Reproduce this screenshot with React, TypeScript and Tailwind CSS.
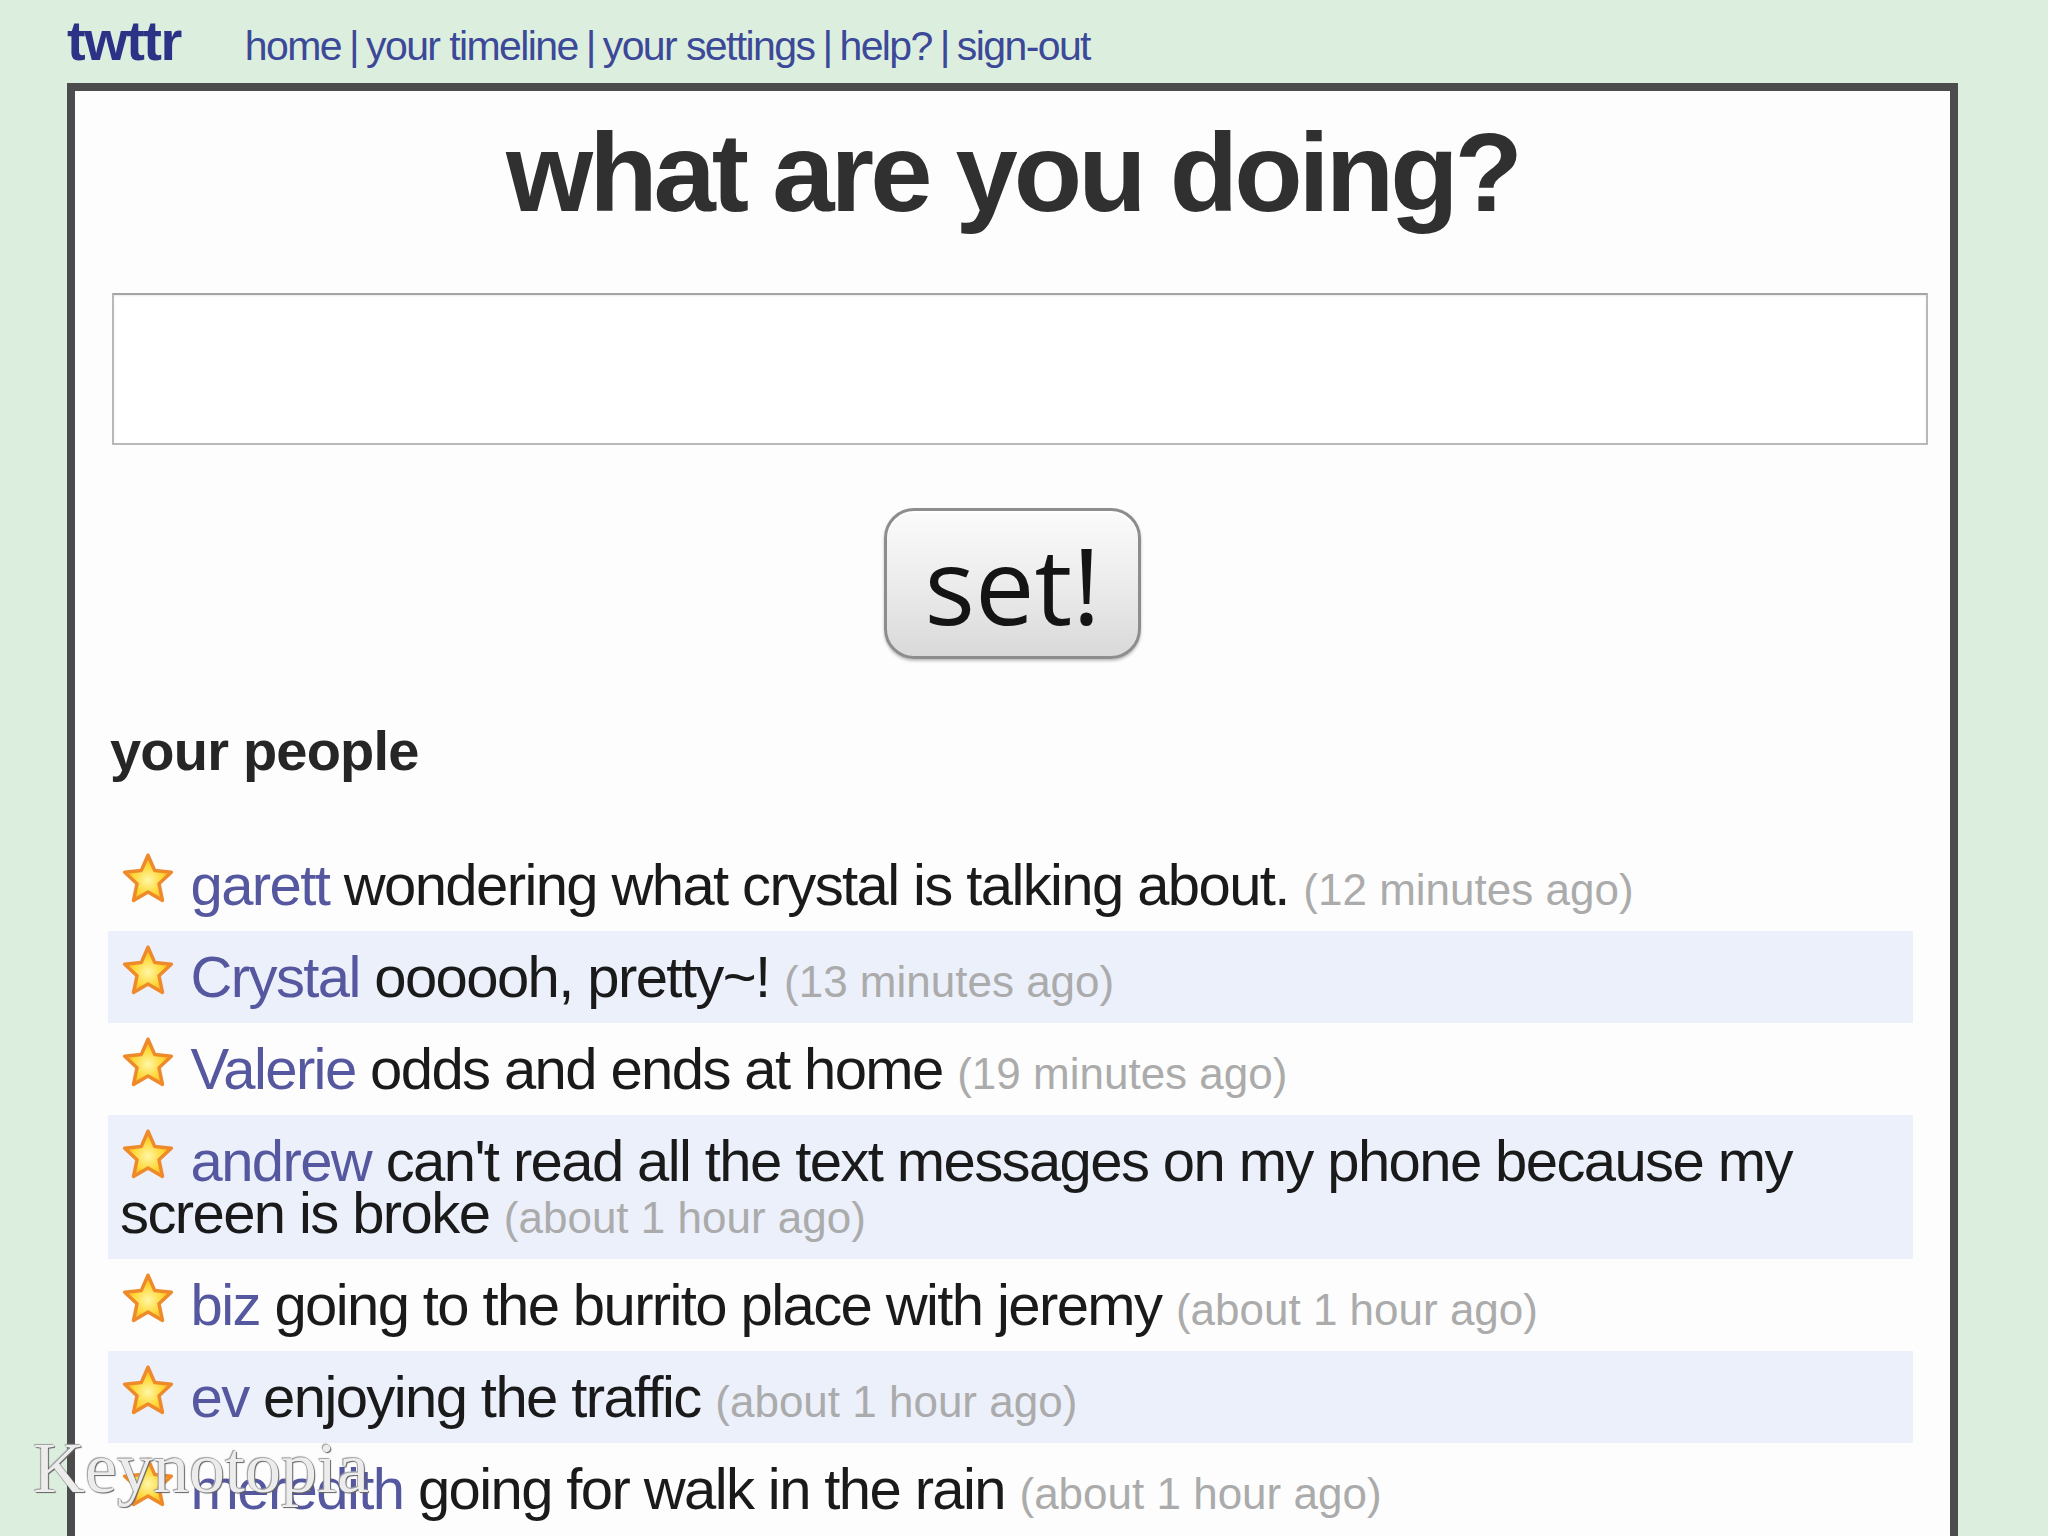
const STATUSES = [
  { name: "garett", text: "wondering what crystal is talking about.", time: "(12 minutes ago)" },
  { name: "Crystal", text: "oooooh, pretty~!", time: "(13 minutes ago)" },
  { name: "Valerie", text: "odds and ends at home", time: "(19 minutes ago)" },
  {
    name: "andrew",
    text: "can't read all the text messages on my phone because my screen is broke",
    time: "(about 1 hour ago)",
  },
  { name: "biz", text: "going to the burrito place with jeremy", time: "(about 1 hour ago)" },
  { name: "ev", text: "enjoying the traffic", time: "(about 1 hour ago)" },
  { name: "meredith", text: "going for walk in the rain", time: "(about 1 hour ago)" },
];

const NAV = ["home", "your timeline", "your settings", "help?", "sign-out"];

function Star() {
  return (
    <svg
      viewBox="0 0 24 24"
      className="-mt-[12px] inline-block h-[56px] w-[56px] align-[-2px]"
    >
      <defs>
        <radialGradient id="starFill" cx="50%" cy="55%" r="55%">
          <stop offset="0%" stopColor="#fff7a8" />
          <stop offset="55%" stopColor="#ffd93a" />
          <stop offset="100%" stopColor="#f7a81c" />
        </radialGradient>
      </defs>
      <polygon
        points="12,1.8 14.9,8.4 22,9.1 16.7,14 18.2,21.2 12,17.6 5.8,21.2 7.3,14 2,9.1 9.1,8.4"
        fill="url(#starFill)"
        stroke="#ef8a2a"
        strokeWidth="1.5"
        strokeLinejoin="round"
      />
    </svg>
  );
}

export default function App() {
  return (
    <div className="relative h-screen overflow-hidden bg-[#dcefdf] pl-[67px] font-['Liberation_Sans',Arial,sans-serif]">
      {/* top bar */}
      <div className="flex h-[83px] items-baseline pt-[13px]">
        <span className="text-[56px] leading-none font-bold tracking-[-1.5px] text-[#2c3386]">
          twttr
        </span>
        <nav className="ml-[64px] text-[41px] leading-none tracking-[-1.6px] text-[#3c4898]">
          {NAV.map((item, i) => (
            <span key={item}>
              {i > 0 && <span className="px-[8px]">|</span>}
              {item}
            </span>
          ))}
        </nav>
      </div>

      {/* main card */}
      <div className="w-[1891px] border-[8px] border-[#4c4c4c] bg-[#fdfdfd] pb-10">
        <h1 className="mt-[26px] text-center text-[112px] leading-none font-bold tracking-[-4px] text-[#303030]">
          what are you doing?
        </h1>

        <div className="mt-[64px] mr-[22px] ml-[37px] h-[152px] border-2 border-[#b9b9b9] border-t-[#a5a5a5] bg-white shadow-[inset_0_1px_2px_rgba(0,0,0,0.08)]" />

        <div className="mt-[63px] flex justify-center">
          <button className="flex h-[151px] w-[257px] items-center justify-center rounded-[30px] border-[3px] border-[#8d8d8d] bg-linear-to-b from-[#fbfbfb] via-[#ececec] to-[#d9d9d9] font-['Open_Sans',sans-serif] text-[106px] leading-none text-[#141414] shadow-[0_2px_3px_rgba(0,0,0,0.25),inset_0_2px_0_#ffffff]">
            set!
          </button>
        </div>

        <h2 className="mt-[64px] ml-[35px] text-[56px] leading-none font-bold tracking-[-0.8px] text-[#262626]">
          your people
        </h2>

        <div className="mt-[60px] mr-[37px] ml-[33px]">
          {STATUSES.map((s, i) => (
            <div
              key={s.name}
              className={`px-[12px] py-[20px] text-[58px] leading-[52px] tracking-[-1.6px] text-[#1a1a1a] ${
                i % 2 === 1 ? "bg-[#ebf0fb]" : "bg-transparent"
              }`}
            >
              <Star />{" "}
              <span className="text-[#55579f]">{s.name}</span> {s.text}{" "}
              <span className="text-[44px] leading-[36px] tracking-normal text-[#ababab]">
                {s.time}
              </span>
            </div>
          ))}
        </div>
      </div>

      {/* watermark */}
      <div className="absolute top-[1432px] left-[33px] font-['Liberation_Serif',serif] text-[72px] leading-none text-white/90 [text-shadow:0_0_1px_#444,1px_1px_1px_#666,-1px_-1px_1px_#aaa]">
        Keynotopia
      </div>
    </div>
  );
}
